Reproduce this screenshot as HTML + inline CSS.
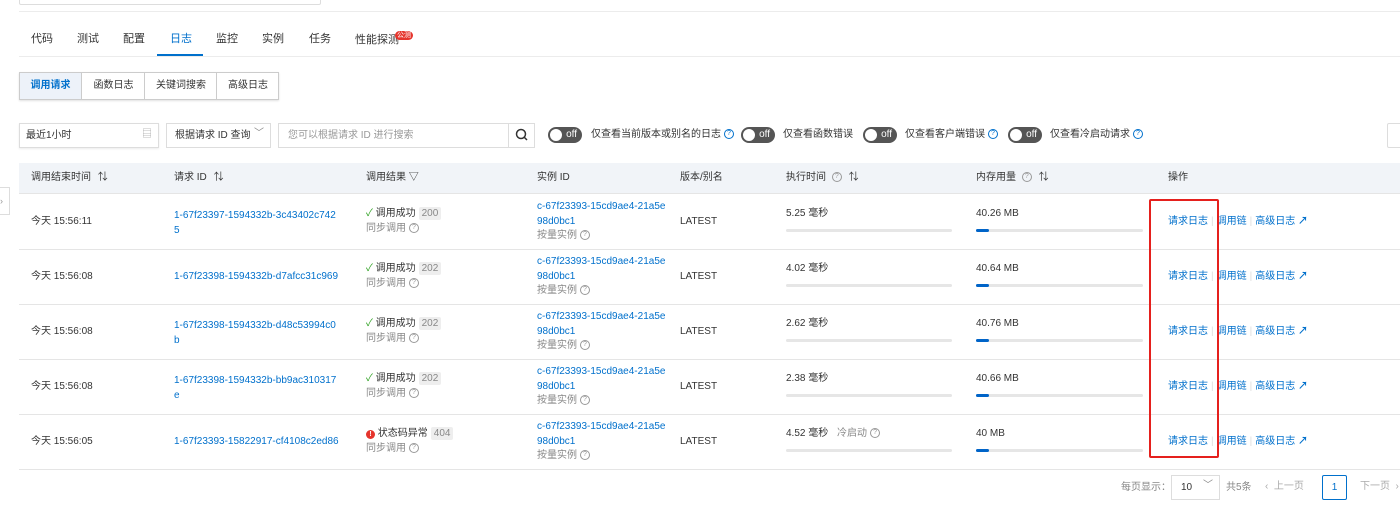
<!DOCTYPE html>
<html><head><meta charset="utf-8"><style>
body{margin:0;width:1400px;height:511px;overflow:hidden;background:#fff;font-family:"Liberation Sans","Noto Sans CJK SC",sans-serif;font-size:10px;line-height:12px;color:#333;position:relative}
.a{position:absolute;white-space:nowrap}
.l{color:#0070cc}
.g{color:#888}
.q{display:inline-block;width:8px;height:8px;border:1px solid #999;border-radius:50%;font-size:7px;line-height:8px;text-align:center;color:#999;vertical-align:middle;margin-left:3px}
.qb{border-color:#0070cc;color:#0070cc}
.hl{position:absolute;height:1px;background:#e5e5e5}
.tg{position:absolute;width:34px;height:16px;border-radius:8px;background:#555;top:127px}
.tg:before{content:"";position:absolute;left:1px;top:1px;width:12px;height:12px;border-radius:50%;background:#fff;border:1px solid #555}
.tg span{position:absolute;right:5px;top:2px;color:#fff;font-size:10px}
.bar{position:absolute;height:3px;background:#e6e6e6;border-radius:2px}
.fill{position:absolute;left:0;top:0;height:3px;width:13px;background:#0064c8;border-radius:2px}
.tag{background:#eee;color:#888;padding:1px 3px;border-radius:2px;margin-left:3px}
.sep{color:#ddd;margin:0 3px}
</style></head><body>
<div class="a" style="left:19px;top:-10px;width:300px;height:13px;border:1px solid #ddd;border-radius:2px"></div>
<div class="hl" style="left:19px;right:0;top:11px;background:#ececec"></div>
<!-- tabs -->
<div class="a" style="left:31px;top:33px;font-size:11px">代码</div>
<div class="a" style="left:77px;top:33px;font-size:11px">测试</div>
<div class="a" style="left:123px;top:33px;font-size:11px">配置</div>
<div class="a l" style="left:170px;top:33px;font-size:11px">日志</div>
<div class="a" style="left:216px;top:33px;font-size:11px">监控</div>
<div class="a" style="left:262px;top:33px;font-size:11px">实例</div>
<div class="a" style="left:309px;top:33px;font-size:11px">任务</div>
<div class="a" style="left:355px;top:34px;font-size:11px">性能探测</div>
<div class="a" style="left:395px;top:31px;background:#e5352d;color:#fff;font-size:7px;line-height:9px;padding:0 2px;border-radius:5px">公测</div>
<div class="hl" style="left:19px;right:0;top:56px;background:#ececec"></div>
<div class="a" style="left:157px;top:54px;width:46px;height:2px;background:#0070cc"></div>
<!-- button group -->
<div class="a" style="left:19px;top:72px;width:258px;height:26px;border:1px solid #ccc;box-shadow:0 1px 2px rgba(0,0,0,.12)"></div>
<div class="a l" style="left:20px;top:73px;width:61px;height:26px;background:#edf2f9;line-height:26px;text-align:center;font-weight:bold">调用请求</div>
<div class="a" style="left:81px;top:73px;width:63px;height:26px;border-left:1px solid #ccc;line-height:26px;text-align:center">函数日志</div>
<div class="a" style="left:144px;top:73px;width:72px;height:26px;border-left:1px solid #ccc;line-height:26px;text-align:center">关键词搜索</div>
<div class="a" style="left:216px;top:73px;width:62px;height:26px;border-left:1px solid #ccc;line-height:26px;text-align:center">高级日志</div>
<!-- filters -->
<div class="a" style="left:19px;top:123px;width:138px;height:23px;border:1px solid #ddd;box-shadow:0 1px 2px rgba(0,0,0,.08)"><span class="a" style="left:6px;top:6px">最近1小时</span><span class="a" style="right:6px;top:5px;color:#aaa">▤</span></div>
<div class="a" style="left:166px;top:123px;width:103px;height:23px;border:1px solid #ddd"><span class="a" style="left:8px;top:6px">根据请求 ID 查询</span><span class="a" style="right:6px;top:4px;color:#888">﹀</span></div>
<div class="a" style="left:278px;top:123px;width:255px;height:23px;border:1px solid #ddd"><span class="a g" style="left:9px;top:6px;color:#999">您可以根据请求 ID 进行搜索</span><div class="a" style="left:229px;top:0;width:26px;height:23px;border-left:1px solid #ddd"><svg width="26" height="23"><circle cx="12" cy="10" r="4.5" fill="none" stroke="#333" stroke-width="1.5"/><path d="M15.5 13.5L18 16" stroke="#333" stroke-width="1.5"/></svg></div></div>
<div class="tg" style="left:548px"><span>off</span></div><div class="a" style="left:591px;top:129px">仅查看当前版本或别名的日志<span class="q qb">?</span></div>
<div class="tg" style="left:741px"><span>off</span></div><div class="a" style="left:783px;top:129px">仅查看函数错误</div>
<div class="tg" style="left:863px"><span>off</span></div><div class="a" style="left:905px;top:129px">仅查看客户端错误<span class="q qb">?</span></div>
<div class="tg" style="left:1008px"><span>off</span></div><div class="a" style="left:1050px;top:129px">仅查看冷启动请求<span class="q qb">?</span></div>
<div class="a" style="left:1387px;top:123px;width:20px;height:23px;border:1px solid #ddd;border-radius:2px"></div>
<!-- header -->
<div class="a" style="left:19px;right:0;top:163px;height:30px;background:#f1f4f8;border-bottom:1px solid #e5e5e5"></div>
<div class="a" style="left:31px;top:172px">调用结束时间 <span style="margin-left:4px">⇅</span></div>
<div class="a" style="left:174px;top:172px">请求 ID <span style="margin-left:4px">⇅</span></div>
<div class="a" style="left:366px;top:172px">调用结果 ▽</div>
<div class="a" style="left:537px;top:172px">实例 ID</div>
<div class="a" style="left:680px;top:172px">版本/别名</div>
<div class="a" style="left:786px;top:172px">执行时间 <span class="q">?</span> <span style="margin-left:4px">⇅</span></div>
<div class="a" style="left:976px;top:172px">内存用量 <span class="q">?</span> <span style="margin-left:4px">⇅</span></div>
<div class="a" style="left:1168px;top:172px">操作</div>
<div class="a" style="left:0;top:187px;width:9px;height:26px;border:1px solid #ddd;border-left:none;background:#fff;color:#999;font-size:9px;line-height:26px">›</div>

<!-- rows -->
<div class="hl" style="left:19px;right:0;top:249px"></div>
<div class="hl" style="left:19px;right:0;top:304px"></div>
<div class="hl" style="left:19px;right:0;top:359px"></div>
<div class="hl" style="left:19px;right:0;top:414px"></div>
<div class="hl" style="left:19px;right:0;top:469px"></div>

<!-- row1 -->
<div class="a" style="left:31px;top:216px">今天 15:56:11</div>
<div class="a l" style="left:174px;top:208px;line-height:15px">1-67f23397-1594332b-3c43402c742<br>5</div>
<div class="a" style="left:366px;top:208px"><span style="color:#2ea121">✓</span> 调用成功<span class="tag">200</span></div>
<div class="a g" style="left:366px;top:223px">同步调用<span class="q">?</span></div>
<div class="a l" style="left:537px;top:200px;line-height:14.5px">c-67f23393-15cd9ae4-21a5e<br>98d0bc1</div>
<div class="a g" style="left:537px;top:230px">按量实例<span class="q">?</span></div>
<div class="a" style="left:680px;top:216px">LATEST</div>
<div class="a" style="left:786px;top:208px">5.25 毫秒</div><div class="bar" style="left:786px;top:229px;width:166px"></div>
<div class="a" style="left:976px;top:208px">40.26 MB</div><div class="bar" style="left:976px;top:229px;width:167px"><div class="fill"></div></div>
<div class="a l" style="left:1168px;top:216px">请求日志<span class="sep">|</span>调用链<span class="sep">|</span>高级日志 <b>↗</b></div>

<!-- row2 -->
<div class="a" style="left:31px;top:271px">今天 15:56:08</div>
<div class="a l" style="left:174px;top:271px">1-67f23398-1594332b-d7afcc31c969</div>
<div class="a" style="left:366px;top:263px"><span style="color:#2ea121">✓</span> 调用成功<span class="tag">202</span></div>
<div class="a g" style="left:366px;top:278px">同步调用<span class="q">?</span></div>
<div class="a l" style="left:537px;top:255px;line-height:14.5px">c-67f23393-15cd9ae4-21a5e<br>98d0bc1</div>
<div class="a g" style="left:537px;top:285px">按量实例<span class="q">?</span></div>
<div class="a" style="left:680px;top:271px">LATEST</div>
<div class="a" style="left:786px;top:263px">4.02 毫秒</div><div class="bar" style="left:786px;top:284px;width:166px"></div>
<div class="a" style="left:976px;top:263px">40.64 MB</div><div class="bar" style="left:976px;top:284px;width:167px"><div class="fill"></div></div>
<div class="a l" style="left:1168px;top:271px">请求日志<span class="sep">|</span>调用链<span class="sep">|</span>高级日志 <b>↗</b></div>

<!-- row3 -->
<div class="a" style="left:31px;top:326px">今天 15:56:08</div>
<div class="a l" style="left:174px;top:318px;line-height:15px">1-67f23398-1594332b-d48c53994c0<br>b</div>
<div class="a" style="left:366px;top:318px"><span style="color:#2ea121">✓</span> 调用成功<span class="tag">202</span></div>
<div class="a g" style="left:366px;top:333px">同步调用<span class="q">?</span></div>
<div class="a l" style="left:537px;top:310px;line-height:14.5px">c-67f23393-15cd9ae4-21a5e<br>98d0bc1</div>
<div class="a g" style="left:537px;top:340px">按量实例<span class="q">?</span></div>
<div class="a" style="left:680px;top:326px">LATEST</div>
<div class="a" style="left:786px;top:318px">2.62 毫秒</div><div class="bar" style="left:786px;top:339px;width:166px"></div>
<div class="a" style="left:976px;top:318px">40.76 MB</div><div class="bar" style="left:976px;top:339px;width:167px"><div class="fill"></div></div>
<div class="a l" style="left:1168px;top:326px">请求日志<span class="sep">|</span>调用链<span class="sep">|</span>高级日志 <b>↗</b></div>

<!-- row4 -->
<div class="a" style="left:31px;top:381px">今天 15:56:08</div>
<div class="a l" style="left:174px;top:373px;line-height:15px">1-67f23398-1594332b-bb9ac310317<br>e</div>
<div class="a" style="left:366px;top:373px"><span style="color:#2ea121">✓</span> 调用成功<span class="tag">202</span></div>
<div class="a g" style="left:366px;top:388px">同步调用<span class="q">?</span></div>
<div class="a l" style="left:537px;top:365px;line-height:14.5px">c-67f23393-15cd9ae4-21a5e<br>98d0bc1</div>
<div class="a g" style="left:537px;top:395px">按量实例<span class="q">?</span></div>
<div class="a" style="left:680px;top:381px">LATEST</div>
<div class="a" style="left:786px;top:373px">2.38 毫秒</div><div class="bar" style="left:786px;top:394px;width:166px"></div>
<div class="a" style="left:976px;top:373px">40.66 MB</div><div class="bar" style="left:976px;top:394px;width:167px"><div class="fill"></div></div>
<div class="a l" style="left:1168px;top:381px">请求日志<span class="sep">|</span>调用链<span class="sep">|</span>高级日志 <b>↗</b></div>

<!-- row5 -->
<div class="a" style="left:31px;top:436px">今天 15:56:05</div>
<div class="a l" style="left:174px;top:436px">1-67f23393-15822917-cf4108c2ed86</div>
<div class="a" style="left:366px;top:428px"><span style="display:inline-block;width:9px;height:9px;border-radius:50%;background:#e5352d;color:#fff;font-size:7px;line-height:9px;text-align:center;font-weight:bold">!</span> 状态码异常<span class="tag">404</span></div>
<div class="a g" style="left:366px;top:443px">同步调用<span class="q">?</span></div>
<div class="a l" style="left:537px;top:420px;line-height:14.5px">c-67f23393-15cd9ae4-21a5e<br>98d0bc1</div>
<div class="a g" style="left:537px;top:450px">按量实例<span class="q">?</span></div>
<div class="a" style="left:680px;top:436px">LATEST</div>
<div class="a" style="left:786px;top:428px">4.52 毫秒 <span class="g" style="margin-left:6px">冷启动</span><span class="q">?</span></div><div class="bar" style="left:786px;top:449px;width:166px"></div>
<div class="a" style="left:976px;top:428px">40 MB</div><div class="bar" style="left:976px;top:449px;width:167px"><div class="fill"></div></div>
<div class="a l" style="left:1168px;top:436px">请求日志<span class="sep">|</span>调用链<span class="sep">|</span>高级日志 <b>↗</b></div>

<!-- red box -->
<div class="a" style="left:1149px;top:199px;width:66px;height:255px;border:2px solid #e5201d;border-radius:2px"></div>

<!-- pagination -->
<div class="a g" style="left:1121px;top:482px">每页显示：</div>
<div class="a" style="left:1171px;top:475px;width:47px;height:23px;border:1px solid #ddd"><span class="a" style="left:9px;top:6px">10</span><span class="a g" style="left:31px;top:4px">﹀</span></div>
<div class="a g" style="left:1226px;top:482px">共5条</div>
<div class="a g" style="left:1265px;top:481px;color:#aaa">‹ &nbsp;上一页</div>
<div class="a" style="left:1322px;top:475px;width:23px;height:23px;border:1px solid #0070cc;border-radius:2px;text-align:center;line-height:23px;color:#0070cc">1</div>
<div class="a g" style="left:1360px;top:481px;color:#aaa">下一页 &nbsp;›</div>
</body></html>
